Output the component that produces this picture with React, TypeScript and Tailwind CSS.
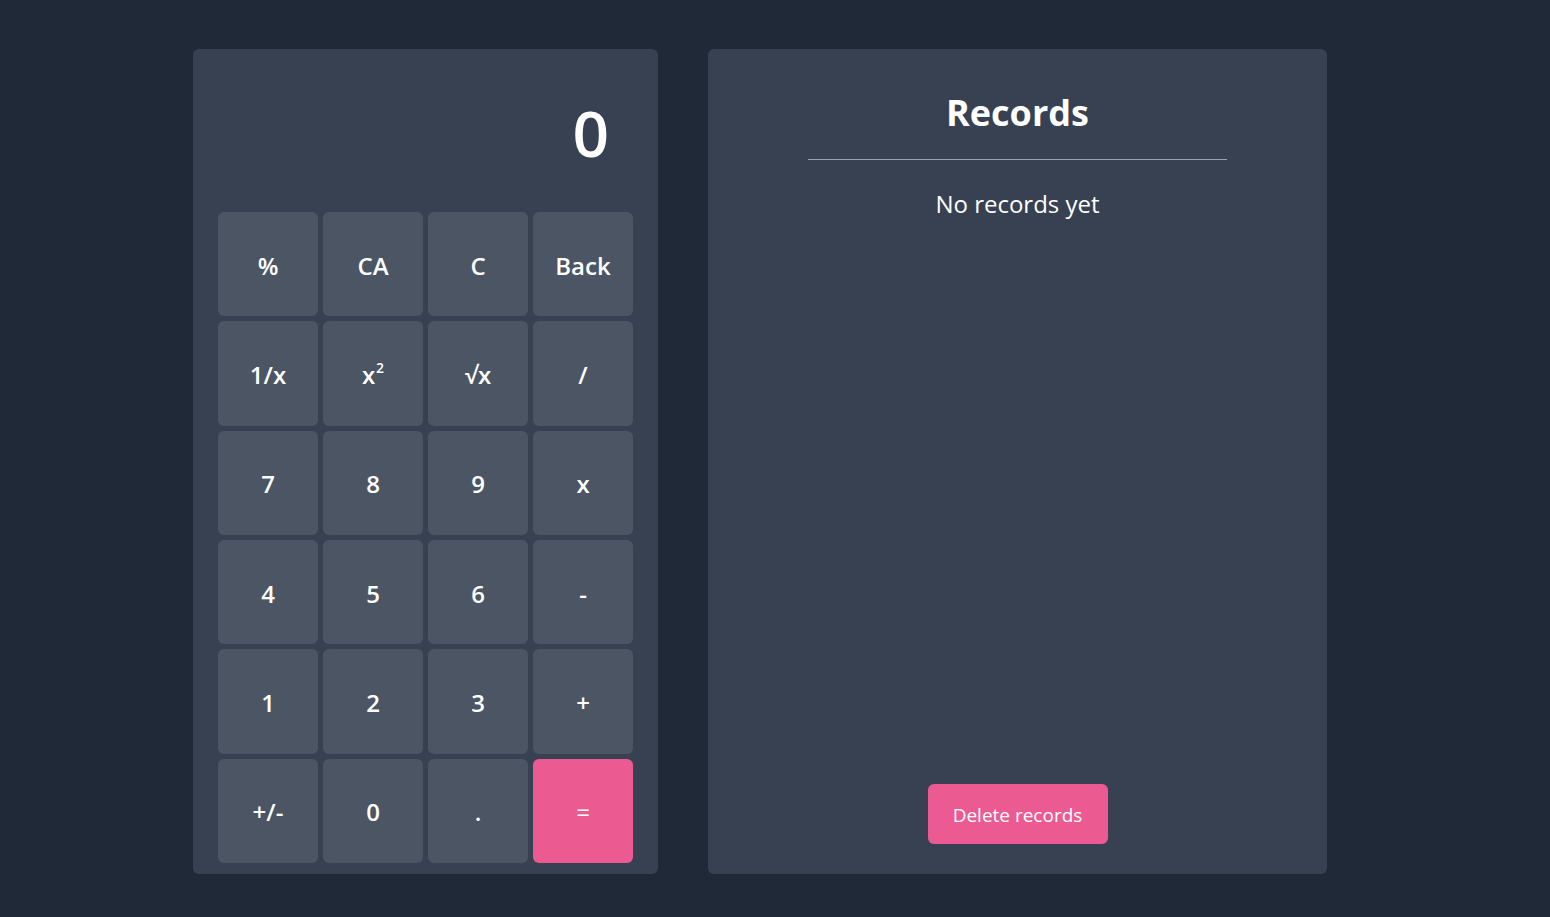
import { useState } from "react";

const keys: { label: React.ReactNode; accent?: boolean }[] = [
  { label: "%" },
  { label: "CA" },
  { label: "C" },
  { label: "Back" },
  { label: "1/x" },
  {
    label: (
      <span>
        x<sup className="text-[14px] ml-[1px] relative -top-[11px]">2</sup>
      </span>
    ),
  },
  { label: "√x" },
  { label: "/" },
  { label: "7" },
  { label: "8" },
  { label: "9" },
  { label: "x" },
  { label: "4" },
  { label: "5" },
  { label: "6" },
  { label: "-" },
  { label: "1" },
  { label: "2" },
  { label: "3" },
  { label: "+" },
  { label: "+/-" },
  { label: "0" },
  { label: "." },
  { label: "=", accent: true },
];

function Calculator() {
  const [display] = useState("0");

  return (
    <section className="w-[465px] h-[825px] rounded-md bg-[#374151] flex flex-col px-[25px] pb-[11px]">
      <div className="h-[163px] flex items-center justify-end pr-[24px] pt-[4px]">
        <span className="text-[64px] font-semibold text-white leading-none">{display}</span>
      </div>
      <div className="flex-1 grid grid-cols-4 grid-rows-6 gap-[5px]">
        {keys.map((k, i) => (
          <button
            key={i}
            className={
              k.accent
                ? "rounded-md bg-[#ec5a92] text-white text-2xl pt-[3px]"
                : "rounded-md bg-[#4b5563] text-white text-2xl font-semibold pt-[3px]"
            }
          >
            {k.label}
          </button>
        ))}
      </div>
    </section>
  );
}

function Records() {
  return (
    <section className="w-[619px] h-[825px] rounded-md bg-[#374151] flex flex-col items-center px-[100px] pt-[38px] pb-[30px]">
      <h2 className="text-4xl font-bold text-white leading-[52px]">Records</h2>
      <hr className="w-full border-t border-[#9ca3af] mt-[20px]" />
      <p className="text-2xl text-white mt-[28px]">No records yet</p>
      <button className="mt-auto w-[180px] h-[60px] rounded-md bg-[#ec5a92] text-white text-[19px] pt-[2px]">
        Delete records
      </button>
    </section>
  );
}

export default function App() {
  return (
    <div
      className="min-h-screen bg-[#1f2937] pl-[193px] pt-[49px] flex gap-[50px] items-start"
      style={{ fontFamily: '"Open Sans", "Noto Sans", sans-serif' }}
    >
      <Calculator />
      <Records />
    </div>
  );
}
